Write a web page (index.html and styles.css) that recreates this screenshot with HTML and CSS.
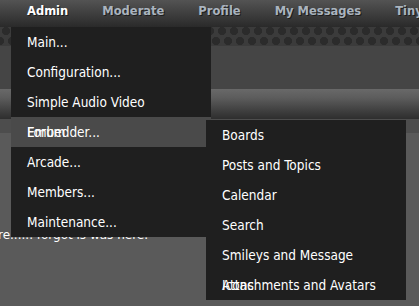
FILE: index.html
```html
<!DOCTYPE html>
<html>
<head>
<meta charset="utf-8">
<link rel="stylesheet" href="styles.css">
</head>
<body>
<div class="page">
  <nav class="topnav">
    <div class="navitem active">Admin
      <div class="dropdown">
        <ul class="dlist">
          <li class="ditem">Main...</li>
          <li class="ditem">Configuration...</li>
          <li class="ditem">Simple Audio Video<br>Embedder...</li>
          <li class="ditem hover">Forum</li>
          <li class="ditem">Arcade...</li>
          <li class="ditem">Members...</li>
          <li class="ditem">Maintenance...</li>
        </ul>
        <ul class="submenu">
          <li class="ditem">Boards</li>
          <li class="ditem">Posts and Topics</li>
          <li class="ditem">Calendar</li>
          <li class="ditem">Search</li>
          <li class="ditem">Smileys and Message<br>Icons</li>
          <li class="ditem">Attachments and Avatars</li>
        </ul>
      </div>
    </div>
    <div class="navitem">Moderate</div>
    <div class="navitem">Profile</div>
    <div class="navitem">My Messages</div>
    <div class="navitem">Tiny Portal</div>
  </nav>
  <div class="dots"></div>
  <div class="panel"></div>
  <div class="bar"></div>
  <div class="band"></div>
  <div class="content">
    <p class="note">re...... forgot is was here.</p>
  </div>
</div>
</body>
</html>
```
FILE: styles.css
```css
html, body {
  margin: 0;
  padding: 0;
}
body {
  width: 419px;
  height: 306px;
  overflow: hidden;
  background: #5a5a5a;
  font-family: "DejaVu Sans", Verdana, sans-serif;
}
.page {
  position: relative;
  width: 419px;
  height: 306px;
}
.topnav {
  height: 27px;
  display: flex;
  padding-left: 10px;
  background: linear-gradient(#535353, #2a2a2a);
  white-space: nowrap;
  position: relative;
  z-index: 5;
}
.navitem {
  padding: 0 17px;
  font-weight: bold;
  font-size: 11.5px;
  line-height: 23px;
  color: #aab4bf;
  text-shadow: 1px 1px 0 #1c1c1c;
  position: relative;
}
.navitem.active {
  color: #ffffff;
}
.dropdown {
  position: absolute;
  left: 1px;
  top: 27px;
  width: 200px;
  text-shadow: none;
  font-family: "DejaVu Sans Condensed", "DejaVu Sans", sans-serif;
  font-stretch: condensed;
}
.dlist {
  margin: 0;
  padding: 0;
  list-style: none;
  background: #1f1f1f;
}
.ditem {
  height: 30px;
  line-height: 30px;
  padding-left: 16px;
  font-size: 13.5px;
  font-weight: normal;
  color: #ffffff;
  white-space: nowrap;
}
.ditem.hover {
  background: #4a4a4a;
}
.submenu {
  position: absolute;
  left: 195px;
  top: 93px;
  width: 200px;
  margin: 0;
  padding: 0;
  list-style: none;
  background: #1f1f1f;
}
.dots {
  height: 19px;
  background-color: #3b3b3b;
  background-image:
    radial-gradient(circle at 6px 4px, #2b2b2b 3.8px, transparent 4.4px),
    radial-gradient(circle at 12px 14px, #2b2b2b 3.8px, transparent 4.4px),
    radial-gradient(circle at 0px 14px, #2b2b2b 3.8px, transparent 4.4px);
  background-size: 12px 19px;
}
.panel {
  height: 43px;
  background: #454545;
}
.bar {
  height: 30px;
  background: linear-gradient(#696969, #5c5c5c 30%, #3a3a3a 80%, #2e2e2e);
}
.band {
  height: 14px;
  background: #4d4d4d;
}
.content {
  padding-top: 95px;
}
.note {
  margin: 0 0 0 -2px;
  font-size: 12px;
  line-height: 14px;
  color: #ffffff;
  font-family: "DejaVu Sans", sans-serif;
}
```
